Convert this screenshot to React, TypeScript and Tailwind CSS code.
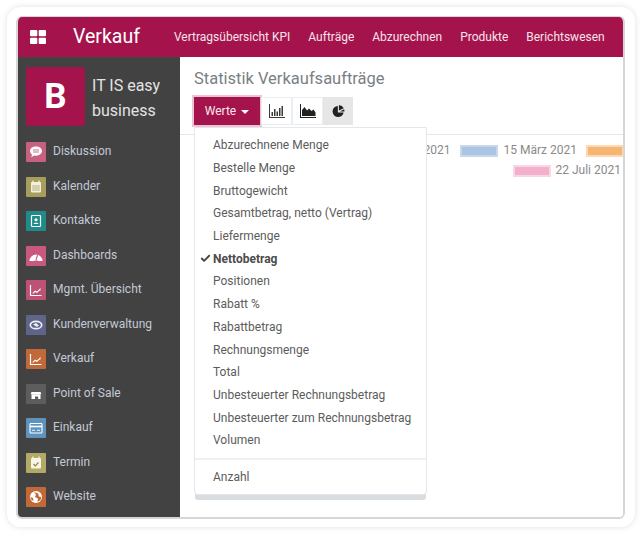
import React from 'react';
import { Check } from 'lucide-react';

const topLinks = ['Vertragsübersicht KPI', 'Aufträge', 'Abzurechnen', 'Produkte', 'Berichtswesen'];

const GlyphChat = () => (
  <svg viewBox="0 0 20 20" className="h-full w-full">
    <path d="M10 4.5c-3.6 0-6 2-6 4.6 0 1.5.8 2.7 2 3.5l-.7 2.6 3-1.7c.6.1 1.1.2 1.7.2 3.6 0 6-2 6-4.6s-2.4-4.600-6-4.600z" fill="#fff" />
    <path d="M7 8h6M7 10h6" stroke="#c8617f" strokeWidth="0.9" />
  </svg>
);
const GlyphCalendar = () => (
  <svg viewBox="0 0 20 20" className="h-full w-full">
    <rect x="5" y="5" width="10" height="10.500" rx="1" fill="#f3efd9" />
    <path d="M7 3.500v3M13 3.500v3" stroke="#f3efd9" strokeWidth="1.300" />
    <path d="M6.500 9h7M6.500 11h7M6.500 13h7" stroke="#8c8550" strokeWidth="0.900" strokeDasharray="1.300 0.600" />
  </svg>
);
const GlyphContact = () => (
  <svg viewBox="0 0 20 20" className="h-full w-full">
    <rect x="5.500" y="4.500" width="9" height="11" rx="0.800" fill="none" stroke="#fff" strokeWidth="1.200" />
    <circle cx="10" cy="8.700" r="1.500" fill="#fff" />
    <path d="M7.500 13c.3-1.700 4.700-1.700 5 0z" fill="#fff" />
  </svg>
);
const GlyphGauge = () => (
  <svg viewBox="0 0 20 20" className="h-full w-full">
    <path d="M3.500 15a6.500 6.500 0 1 1 13 0h-4.300l-1-.600h-2.400l-1 .600z" fill="#fff" />
    <path d="M10 14l1.500-5M6 12.500h.1M14 12.500h.1M7 9h.1M13 9h.1" stroke="#c9587f" strokeWidth="1.100" />
  </svg>
);
const GlyphTrendBox = () => (
  <svg viewBox="0 0 20 20" className="h-full w-full">
    <path d="M4.500 5v10.500h11" fill="none" stroke="#fff" strokeWidth="1.200" />
    <path d="M6.500 13l2.500-2.500 2 1 3.500-3.500v2.500h-1L11 13l-2-1-2 2z" fill="#fff" />
  </svg>
);
const GlyphHands = () => (
  <svg viewBox="0 0 20 20" className="h-full w-full">
    <ellipse cx="10" cy="10" rx="5.700" ry="3.700" fill="none" stroke="#eef0f5" strokeWidth="1.700" />
    <path d="M7 9.500l3-1.500 3 2.500-2 1.500z" fill="#eef0f5" />
  </svg>
);
const GlyphStore = () => (
  <svg viewBox="0 0 20 20" className="h-full w-full">
    <path d="M5.500 8h9l.8 2.300H4.700z" fill="#fff" />
    <path d="M5.500 10.300h9V15h-2.300v-2.500H9V15H5.500z" fill="#fff" />
  </svg>
);
const GlyphCard = () => (
  <svg viewBox="0 0 20 20" className="h-full w-full">
    <rect x="4" y="5.500" width="12" height="9.500" rx="0.800" fill="none" stroke="#fff" strokeWidth="1.100" />
    <path d="M4 8.500h12" stroke="#fff" strokeWidth="1.600" />
    <path d="M6 12.300h3M11 12.300h3" stroke="#fff" strokeWidth="0.900" />
  </svg>
);
const GlyphTermin = () => (
  <svg viewBox="0 0 20 20" className="h-full w-full">
    <rect x="5" y="5" width="10" height="10.500" rx="1" fill="#f8f5e4" />
    <path d="M7 3.500v3M13 3.500v3" stroke="#f8f5e4" strokeWidth="1.300" />
    <path d="M7.500 11l1.800 1.800 3.200-3.300" fill="none" stroke="#8c8550" strokeWidth="1.200" />
  </svg>
);
const GlyphGlobe = () => (
  <svg viewBox="0 0 20 20" className="h-full w-full">
    <circle cx="10" cy="10" r="6" fill="#fff" />
    <path d="M8 5l2 2.500-1 2.500 3 1.500-.5 3.500 3-2 .800-3-2.500-.500-.500-3z" fill="#c2693a" />
    <path d="M4.500 10l2.500 1 .500 3-2-1z" fill="#c2693a" />
  </svg>
);

const apps = [
  { label: 'Diskussion', bg: 'bg-[#c8617f]', glyph: <GlyphChat /> },
  { label: 'Kalender', bg: 'bg-[#a89e5c]', glyph: <GlyphCalendar /> },
  { label: 'Kontakte', bg: 'bg-[#1f8c8a]', glyph: <GlyphContact /> },
  { label: 'Dashboards', bg: 'bg-[#c9587f]', glyph: <GlyphGauge /> },
  { label: 'Mgmt. Übersicht', bg: 'bg-[#bd5274]', glyph: <GlyphTrendBox /> },
  { label: 'Kundenverwaltung', bg: 'bg-[#5f6488]', glyph: <GlyphHands /> },
  { label: 'Verkauf', bg: 'bg-[#c2693a]', glyph: <GlyphTrendBox /> },
  { label: 'Point of Sale', bg: 'bg-[#5d5d5d]', glyph: <GlyphStore /> },
  { label: 'Einkauf', bg: 'bg-[#5d93bd]', glyph: <GlyphCard /> },
  { label: 'Termin', bg: 'bg-[#b3aa68]', glyph: <GlyphTermin /> },
  { label: 'Website', bg: 'bg-[#c2693a]', glyph: <GlyphGlobe /> },
];

const measures = [
  'Abzurechnene Menge',
  'Bestelle Menge',
  'Bruttogewicht',
  'Gesamtbetrag, netto (Vertrag)',
  'Liefermenge',
  'Nettobetrag',
  'Positionen',
  'Rabatt %',
  'Rabattbetrag',
  'Rechnungsmenge',
  'Total',
  'Unbesteuerter Rechnungsbetrag',
  'Unbesteuerter zum Rechnungsbetrag',
  'Volumen',
];

const IconBars = () => (
  <svg viewBox="0 0 16 14" className="h-[14px] w-[16px]" fill="#3a3a3a">
    <path d="M0 0h1v13h15v1H0z" />
    <path d="M2.500 8h1.500v4H2.500zM5 5h1.500v7H5zM7.500 7.500H9V12H7.500zM10 4h1.500v8H10zM12.500 2H14v10h-1.500z" />
  </svg>
);
const IconArea = () => (
  <svg viewBox="0 0 16 14" className="h-[14px] w-[16px]" fill="#222">
    <path d="M0 0h1v13h15v1H0z" />
    <path d="M2 12V6l2.500-3L7 6.500l2-2 2.500 2.500 2-1.500 2 3V12z" />
  </svg>
);
const IconPie = () => (
  <svg viewBox="0 0 14 14" className="h-[13px] w-[13px]" fill="#222">
    <path d="M6.300 1A6 6 0 1 0 12.500 8H6.300z" />
    <path d="M7.500 0a6.300 6.300 0 0 1 5.200 3.500L7.500 6z" />
    <path d="M13 4.700a6.300 6.300 0 0 1 .4 2.300H8.500z" />
  </svg>
);

const LegendSwatch = ({ color }: { color: string }) => (
  <span className={`inline-block h-[12px] w-[38px] border-2 ${color}`} />
);

const App = () => {
  return (
    <div className="h-[537px] w-[642px] bg-white p-[7px] font-['Roboto',sans-serif]">
      <div className="h-[520px] w-[628px] rounded-[14px] bg-white p-[9px] shadow-[0_0_6px_rgba(0,0,0,0.12)]">
        <div className="flex h-[503px] w-[609px] flex-col overflow-hidden rounded-[6px] border-2 border-[#d6d6d6] border-t-[1px]">
          <header className="flex h-[40px] shrink-0 items-center bg-[#a5134c] text-white">
            <svg viewBox="0 0 16 14" className="ml-[12px] h-[14px] w-[16px]" fill="#fff">
              <rect x="0" y="0" width="7.300" height="6.300" rx="1" />
              <rect x="8.700" y="0" width="7.300" height="6.300" rx="1" />
              <rect x="0" y="7.700" width="7.300" height="6.300" rx="1" />
              <rect x="8.700" y="7.700" width="7.300" height="6.300" rx="1" />
            </svg>
            <span className="ml-[27px] text-[19.500px] leading-none">Verkauf</span>
            <nav className="ml-[34px] flex gap-[18px] whitespace-nowrap text-[12px] text-[#f5e3ea]">
              {topLinks.map((link) => (
                <span key={link}>{link}</span>
              ))}
            </nav>
          </header>

          <div className="flex min-h-0 flex-1">
            <aside className="flex w-[162px] shrink-0 flex-col bg-[#424242] pl-[8px]">
              <div className="flex pt-[10px]">
                <div className="flex h-[59px] w-[59px] items-center justify-center rounded-[3px] bg-[#a5134c] text-[35px] font-bold leading-none text-white">
                  B
                </div>
                <div className="ml-[7px] pt-[6px] text-[16px] leading-[25px] text-[#e3e3e3]">
                  IT IS easy
                  <br />
                  business
                </div>
              </div>
              <ul className="mt-[16px] flex flex-col gap-[14.500px]">
                {apps.map((app) => (
                  <li key={app.label} className="flex h-[20px] items-center">
                    <span className={`h-[20px] w-[20px] shrink-0 rounded-[1px] ${app.bg}`}>{app.glyph}</span>
                    <span className="ml-[7px] -translate-y-[1px] whitespace-nowrap text-[12px] text-[#c3c9d6]">{app.label}</span>
                  </li>
                ))}
              </ul>
            </aside>

            <main className="relative min-w-0 flex-1 bg-white">
              <div className="h-[78px] border-b border-[#e6e6e6] pl-[14px] pt-[12px]">
                <h1 className="text-[16.500px] leading-[20px] text-[#7a7f85]">Statistik Verkaufsaufträge</h1>
                <div className="mt-[8px] flex h-[28px] items-stretch">
                  <button className="flex w-[66px] items-center justify-center gap-[5px] bg-[#a5134c] text-[12px] text-[#f8e8ee] shadow-[0_0_0_2px_#ecc3d3]">
                    Werte
                    <span className="mt-[1px] border-x-[4px] border-t-[4px] border-x-transparent border-t-white" />
                  </button>
                  <span className="ml-[1px] flex w-[31px] items-center justify-center border border-[#eaeef2] bg-white"><IconBars /></span>
                  <span className="flex w-[31px] items-center justify-center border border-[#eaeef2] bg-white"><IconArea /></span>
                  <span className="flex w-[30px] items-center justify-center bg-[#e6e6e6]"><IconPie /></span>
                </div>
              </div>

              <div className="flex flex-col items-end gap-[5px] whitespace-nowrap pr-[2px] pt-[8px] text-[12px] leading-[15px] text-[#8a8a8a]">
                <div className="mr-[-3px] flex items-center gap-[6px] overflow-hidden">
                  <span>März 2021</span>
                  <LegendSwatch color="ml-[3px] border-[#c9d7e9] bg-[#a9c4e4]" />
                  <span>15 März 2021</span>
                  <LegendSwatch color="ml-[3px] border-[#f9d9b8] bg-[#f6b672]" />
                </div>
                <div className="flex items-center gap-[5px]">
                  <LegendSwatch color="border-[#f8d6e5] bg-[#f2b0cd]" />
                  <span>22 Juli 2021</span>
                </div>
              </div>

              <div className="absolute left-[14px] top-[70px] w-[233px] rounded-b-[4px] border border-[#e3e8ee] bg-white py-[6px] text-[12px] text-[#5c5c5c] shadow-[0_6px_0_-1px_#d9dde0]">
                {measures.map((m) => (
                  <div key={m} className="relative flex h-[22.700px] items-center pl-[18px]">
                    {m === 'Nettobetrag' && (
                      <Check size={11} strokeWidth={4} className="absolute left-[5px] text-[#444]" />
                    )}
                    <span className={m === 'Nettobetrag' ? 'font-bold text-[#4c4c4c]' : ''}>{m}</span>
                  </div>
                ))}
                <div className="my-[6px] h-[2px] bg-[#eef0f2]" />
                <div className="flex h-[22px] items-center pl-[18px]">Anzahl</div>
              </div>
            </main>
          </div>
        </div>
      </div>
    </div>
  );
};

export default App;
